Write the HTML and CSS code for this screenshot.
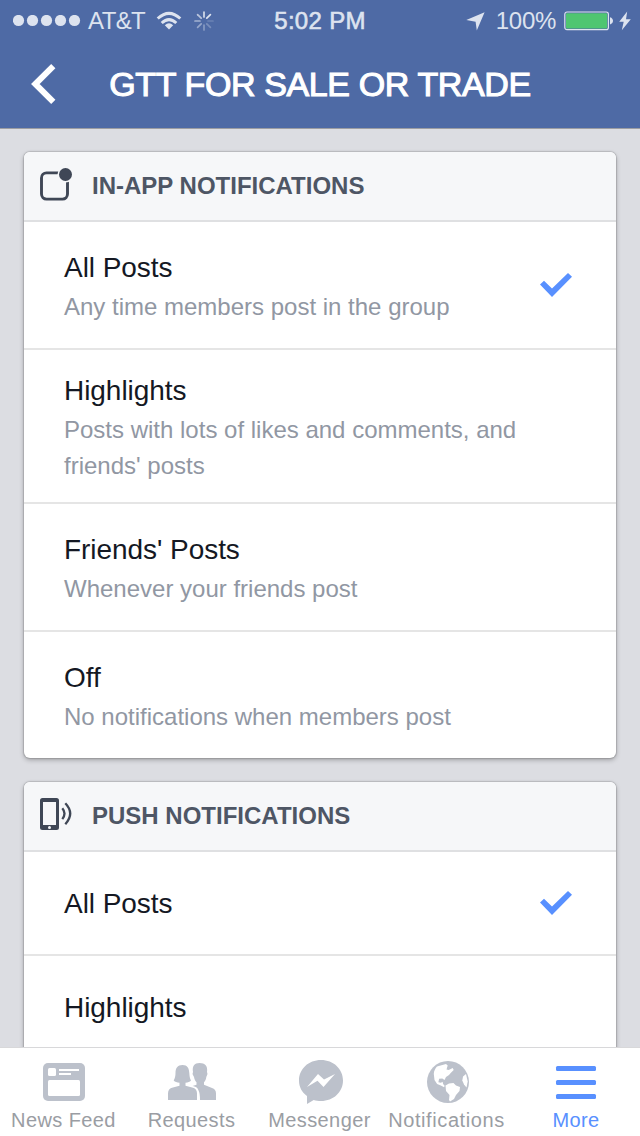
FILE: index.html
```html
<!DOCTYPE html>
<html lang="en">
<head>
    <meta charset="UTF-8">
    <meta name="viewport" content="width=device-width, initial-scale=1.0">
    <title>GTT For Sale or Trade</title>
    <link rel="stylesheet" href="styles.css">
</head>
<body>
    <header class="top">
        <div class="status-bar">
            <div class="status-left">
                <svg width="68" height="12" viewBox="0 0 68 12" fill="currentColor">
                    <circle cx="5.5" cy="5.5" r="5.6"/>
                    <circle cx="19.5" cy="5.5" r="5.6"/>
                    <circle cx="33.5" cy="5.5" r="5.6"/>
                    <circle cx="47.5" cy="5.5" r="5.6"/>
                    <circle cx="61.5" cy="5.5" r="5.6"/>
                </svg>
                <span class="carrier">AT&amp;T</span>
                <svg class="wifi" width="26" height="20" viewBox="0 0 26 20" fill="none" stroke="currentColor" stroke-width="3">
                    <path d="M1.7 7.5Q13 -2.8 24.3 7.5"/>
                    <path d="M5.7 12Q13 5.2 20.3 12"/>
                    <path d="M13 18.6l-4.2-4.4q4.2-3.8 8.4 0z" fill="currentColor" stroke="none"/>
                </svg>
                <svg class="spinner" width="20" height="20" viewBox="0 0 20 20" stroke="currentColor" stroke-width="1.7" stroke-linecap="round">
                    <path d="M10 1v5" opacity=".95"/>
                    <path d="M16.4 3.6l-3.6 3.6"/>
                    <path d="M19 10h-5" opacity=".2"/>
                    <path d="M16.4 16.4l-3.6-3.6" opacity=".3"/>
                    <path d="M10 19v-5" opacity=".4"/>
                    <path d="M3.6 16.4l3.6-3.6" opacity=".5"/>
                    <path d="M1 10h5" opacity=".6"/>
                    <path d="M3.6 3.6l3.6 3.6" opacity=".75"/>
                </svg>
            </div>
            <div class="clock">5:02 PM</div>
            <div class="status-right">
                <svg width="19" height="19" viewBox="0 0 19 19" fill="currentColor">
                    <path d="M18.6 .3L10.8 18.5 9.6 9.8 .3 8z"/>
                </svg>
                <span class="percent">100%</span>
                <svg class="battery" width="50" height="20" viewBox="0 0 50 20">
                    <rect x=".8" y="1" width="43.6" height="17.6" rx="2.2" fill="none" stroke="#dde3ef" stroke-width="1.2"/>
                    <rect x="2" y="2.2" width="41.2" height="15.2" rx="1" fill="#4fc671"/>
                    <path d="M46 6.2q3 1 3 3.6t-3 3.6z" fill="#dde3ef"/>
                </svg>
                <svg class="bolt" width="12" height="20" viewBox="0 0 12 20" fill="currentColor">
                    <path d="M8.2 .5L.2 10.8h4.5L2.8 19.3 11.8 8.2H7z"/>
                </svg>
            </div>
        </div>
        <div class="nav-bar">
            <svg class="back" width="26" height="40" viewBox="0 0 26 40" fill="none" stroke="#fff" stroke-width="6">
                <path d="M22.3 2.2L4.3 20l18 17.8"/>
            </svg>
            <h1 class="nav-title">GTT FOR SALE OR TRADE</h1>
        </div>
    </header>

    <main class="content">
        <section class="card">
            <div class="card-header">
                <svg class="card-icon" width="34" height="34" viewBox="0 0 34 34">
                    <path d="M24 5.9H6.5a5 5 0 0 0-5 5v16.200a5 5 0 0 0 5 5h16a5 5 0 0 0 5-5V9" fill="none" stroke="#3f4756" stroke-width="2.9"/>
                    <circle cx="25.5" cy="7.5" r="8" fill="#f6f7f9"/>
                    <circle cx="25.5" cy="7.5" r="6.5" fill="#3f4756"/>
                </svg>
                <h2 class="card-title">IN-APP NOTIFICATIONS</h2>
            </div>
            <div class="row">
                <div class="row-text">
                    <div class="row-title">All Posts</div>
                    <div class="row-desc">Any time members post in the group</div>
                </div>
                <svg class="check" width="32" height="24" viewBox="0 0 32 24" fill="#5890ff">
                    <path d="M0 11.5L4 7.7 12 15.4 28 0 32 3.8 12 24z"/>
                </svg>
            </div>
            <div class="row row-tall">
                <div class="row-text">
                    <div class="row-title">Highlights</div>
                    <div class="row-desc">Posts with lots of likes and comments, and friends' posts</div>
                </div>
            </div>
            <div class="row">
                <div class="row-text">
                    <div class="row-title">Friends' Posts</div>
                    <div class="row-desc">Whenever your friends post</div>
                </div>
            </div>
            <div class="row">
                <div class="row-text">
                    <div class="row-title">Off</div>
                    <div class="row-desc">No notifications when members post</div>
                </div>
            </div>
        </section>

        <section class="card">
            <div class="card-header">
                <svg class="card-icon" width="34" height="34" viewBox="0 0 34 34">
                    <path fill="#3f4756" fill-rule="evenodd" d="M2.5 1h14A2.5 2.5 0 0 1 19 3.5v27a2.5 2.5 0 0 1-2.5 2.5h-14A2.5 2.5 0 0 1 0 30.5v-27A2.5 2.5 0 0 1 2.5 1zM3 5v23h13V5z"/>
                    <circle cx="9.5" cy="30.5" r="1.5" fill="#f6f7f9"/>
                    <path d="M22.3 11.3q4.4 5.2 0 10.8M25.3 6.2q9.8 10.3 0 21" fill="none" stroke="#3f4756" stroke-width="2.3"/>
                </svg>
                <h2 class="card-title">PUSH NOTIFICATIONS</h2>
            </div>
            <div class="row row-short">
                <div class="row-title">All Posts</div>
                <svg class="check" width="32" height="24" viewBox="0 0 32 24" fill="#5890ff">
                    <path d="M0 11.5L4 7.7 12 15.4 28 0 32 3.8 12 24z"/>
                </svg>
            </div>
            <div class="row row-short">
                <div class="row-title">Highlights</div>
            </div>
        </section>
    </main>

    <nav class="tab-bar">
        <a class="tab">
            <svg width="48" height="48" viewBox="0 0 48 48">
                <rect x="3" y="5" width="42" height="38" rx="5" fill="#bcc1cb"/>
                <g fill="#fff">
                    <rect x="8" y="10" width="8" height="8" rx="1.5"/>
                    <rect x="19" y="11" width="20" height="2"/>
                    <rect x="19" y="15" width="12" height="2"/>
                    <rect x="8" y="22" width="32" height="16" rx="1.5"/>
                </g>
            </svg>
            <span class="tab-label">News Feed</span>
        </a>
        <a class="tab">
            <svg width="48" height="48" viewBox="0 0 48 48" fill="#bcc1cb">
                <path d="M31.5 5c-5 0-7.500 3-6.500 9l-.5 2 1.500 3c.5 2.500 1.200 4 2.500 5.200v2.500l-4 1.300c4 .5 5.500 2.500 6 4.500Q32 35 32 42H48v-6.500q0-4.500-4-5.500l-8-3.300v-2.500c1.300-1.200 2-2.700 2.300-5.200l1.200-3-.5-2c1-6-2-9-7.500-9z"/>
                <path d="M14.500 7C9.500 7 7.500 10 7.500 15c0 3-.5 5-1.800 7.500 1.300 1.500 3.300 2 5.800 2.200v3L4 29.700q-4 1.300-4 5.800V42h29v-6.500q0-4.500-4-5.800l-7.500-2v-3c2.500-.2 4.300-.7 5.500-2.200-1.300-2.500-1.500-4.500-1.700-7.500C21 10 19.500 7 14.500 7z"/>
            </svg>
            <span class="tab-label">Requests</span>
        </a>
        <a class="tab">
            <svg width="48" height="48" viewBox="0 0 48 48">
                <path fill="#bcc1cb" d="M25 2c12.5 0 22 9 22 20.5S37.5 43 25 43c-2.6 0-5-.3-7.3-1.1L11 46v-8C6 34.5 3 29 3 22.5 3 11 12.5 2 25 2z"/>
                <path fill="#fff" d="M11 29l11-13 6 5.5L39 16 27.5 29l-6-6.3z"/>
            </svg>
            <span class="tab-label">Messenger</span>
        </a>
        <a class="tab">
            <svg width="48" height="48" viewBox="0 0 48 48">
                <circle cx="24" cy="24" r="21" fill="#bcc1cb"/>
                <g fill="#fff">
                    <path d="M13 8.5l9-2.6 1.7 1.7-1.2 4 2.2.5 4-2 1 1.8-3 3-1.7 2.200-3 1.800-1.500 3.200-2.200-1.500-3.200.2-.7 3.500 2.500.5 1.700-1 .5 2.200 1.500 1.700-.5 1.500-3.300-1.600-3.700-1.600-2.600-4-.7-6c0-3 1.500-5.500 3.200-7.500z"/>
                    <path d="M21.5 27.500l3.500-2 4.500-.5 2.500 2.500 4 1.500-.5 4-3.500 4-2 4-4 2.500-1-1.500.5-5-3.500-4z"/>
                    <path d="M42 16l-3 2.500-.7 4 1.700 4 2.500 3 1.200-6z"/>
                </g>
            </svg>
            <span class="tab-label tab-label-wide">Notifications</span>
        </a>
        <a class="tab tab-active">
            <svg width="48" height="48" viewBox="0 0 48 48" fill="#5890ff">
                <rect x="4" y="8" width="40" height="5" rx="1.5"/>
                <rect x="4" y="22" width="40" height="5" rx="1.5"/>
                <rect x="4" y="36" width="40" height="5" rx="1.5"/>
            </svg>
            <span class="tab-label">More</span>
        </a>
    </nav>
</body>
</html>
```
FILE: styles.css
```css
* {
    box-sizing: border-box;
}

body {
    margin: 0;
    height: 1136px;
    display: flex;
    flex-direction: column;
    overflow: hidden;
    font-family: "Liberation Sans", Arial, Helvetica, sans-serif;
    background-color: #dcdde2;
    color: #141823;
}

svg {
    display: block;
    flex: none;
}

/* Status bar and navigation */
.top {
    height: 129px;
    flex: none;
    background-color: #4e6aa5;
    border-bottom: 1px solid #9c9da2;
    color: #fff;
}

.status-bar {
    height: 40px;
    padding: 1px 9px 0 13px;
    display: grid;
    grid-template-columns: 1fr auto 1fr;
    align-items: center;
    color: #dde3ef;
    font-size: 24px;
    line-height: 40px;
}

.status-left,
.status-right {
    display: flex;
    align-items: center;
}

.status-right {
    justify-content: flex-end;
}

.carrier {
    margin-left: 7px;
    letter-spacing: -0.6px;
}

.wifi {
    margin-left: 11px;
}

.spinner {
    margin-left: 12px;
}

.clock {
    margin-right: 4px;
    letter-spacing: 0.3px;
    -webkit-text-stroke: 0.6px currentColor;
}

.percent {
    margin-left: 11px;
    letter-spacing: -0.3px;
}

.battery {
    margin-left: 8px;
}

.bolt {
    margin-left: 5px;
}

.nav-bar {
    height: 88px;
    padding: 0 31px;
    display: grid;
    grid-template-columns: 26px 1fr 26px;
    align-items: center;
}

.nav-title {
    margin: 0;
    text-align: center;
    white-space: nowrap;
    font-size: 34px;
    font-weight: 400;
    letter-spacing: -0.38px;
    -webkit-text-stroke: 1.1px #fff;
}

/* Notification settings */
.content {
    flex: 1;
    min-height: 0;
    overflow: hidden;
    padding: 23px 24px 0;
}

.card {
    margin-bottom: 24px;
    background-color: #fff;
    border-radius: 6px;
    box-shadow: 0 0 1px 1px rgba(0, 0, 0, 0.13), 0 2px 5px rgba(0, 0, 0, 0.28);
}

.card-header {
    height: 70px;
    padding: 0 16px;
    display: flex;
    align-items: center;
    gap: 18px;
    background-color: #f6f7f9;
    border-bottom: 2px solid #dfe0e2;
    border-radius: 6px 6px 0 0;
}

.card-icon {
    margin-bottom: 4px;
}

.card-title {
    margin: 0;
    font-size: 24px;
    line-height: 36px;
    color: #4e5665;
}

.row {
    height: 128px;
    padding: 0 44px 0 40px;
    display: flex;
    align-items: center;
    justify-content: space-between;
    border-bottom: 2px solid #e5e5e5;
}

.row:last-child {
    height: 126px;
    border-bottom: none;
}

.row-tall {
    height: 154px;
}

.row-short {
    height: 104px;
}

.row-short:last-child {
    height: 102px;
}

.row-text {
    width: 460px;
}

.row-title {
    font-size: 28px;
    line-height: 43px;
    letter-spacing: -0.05px;
}

.row-desc {
    font-size: 24px;
    line-height: 36px;
    color: #9197a3;
}

/* Bottom tabs */
.tab-bar {
    height: 89px;
    flex: none;
    display: grid;
    grid-template-columns: repeat(5, 1fr);
    background-color: #fff;
    border-top: 1px solid #d8d8da;
}

.tab {
    padding-top: 10px;
    display: flex;
    flex-direction: column;
    align-items: center;
    color: #9a9da3;
}

.tab-label {
    margin-right: 1px;
    font-size: 20px;
    line-height: 28px;
    letter-spacing: 0.4px;
}

.tab-label-wide {
    margin-right: 3px;
    letter-spacing: 0.6px;
}

.tab-active {
    color: #5890ff;
}

.tab-active .tab-label {
    margin-right: 0;
}
```
